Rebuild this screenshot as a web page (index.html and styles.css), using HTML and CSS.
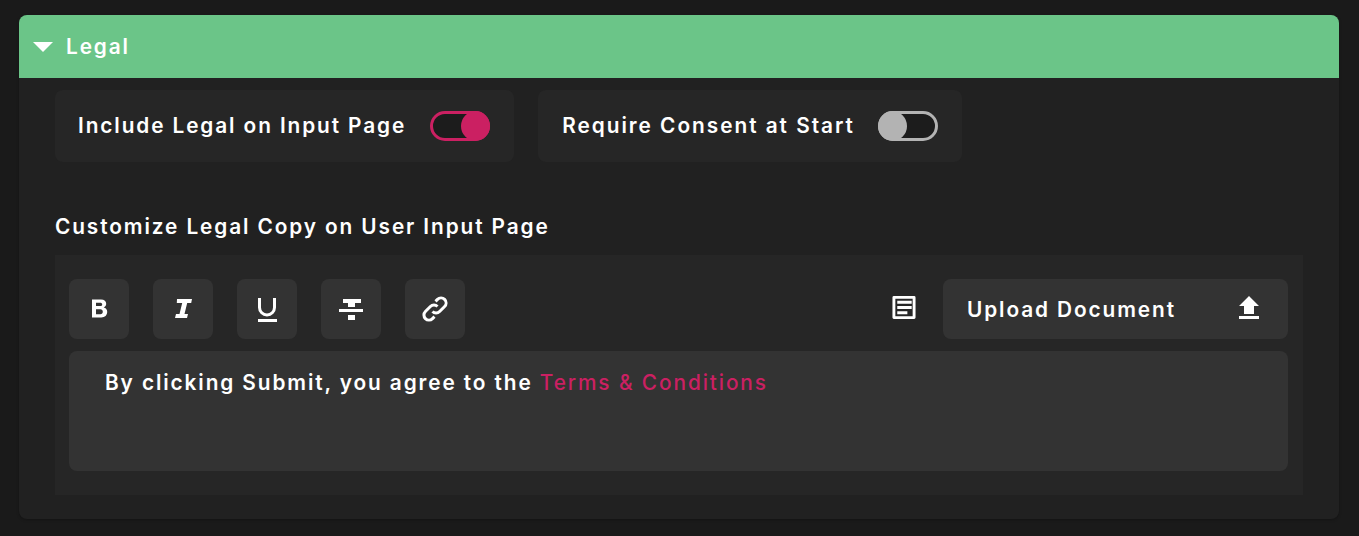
FILE: index.html
```html
<!DOCTYPE html>
<html lang="en">
<head>
<meta charset="utf-8">
<title>Legal</title>
<link rel="stylesheet" href="styles.css">
</head>
<body>
<section class="card">
  <header class="card-head">
    <svg class="caret" width="20" height="10" viewBox="0 0 20 10"><path d="M0 0H20L10 10Z" fill="#fff"/></svg>
    <span>Legal</span>
  </header>
  <div class="card-body">
    <div class="toggles">
      <div class="toggle-card first">
        <span class="toggle-label">Include Legal on Input Page</span>
        <span class="switch on"><i class="knob"></i></span>
      </div>
      <div class="toggle-card second">
        <span class="toggle-label">Require Consent at Start</span>
        <span class="switch"><i class="knob"></i></span>
      </div>
    </div>
    <h2 class="section-title">Customize Legal Copy on User Input Page</h2>
    <div class="editor">
      <div class="toolbar">
        <button class="tool"><svg width="24" height="24" viewBox="0 0 24 24"><path fill="#fff" fill-rule="evenodd" d="M5 2.500h9c3.300 0 5.200 1.600 5.200 4.300 0 1.800-1 3.100-2.500 3.700 2.200.5 3.500 2.100 3.500 4.300 0 3.500-2.300 5.700-5.900 5.700H5zM9 5.800v3.300h4c1.400 0 2.200-.6 2.200-1.700 0-1-.8-1.600-2.200-1.600zM9 12.300v4.900h4.400c1.500 0 2.400-.9 2.400-2.500 0-1.500-.9-2.400-2.400-2.400z"/></svg></button>
        <button class="tool"><svg width="24" height="24" viewBox="0 0 24 24"><path fill="#fff" d="M6 2H21L20.200 6H16.200L13.500 17H17L16 21H4L5 17H8.500L11.200 6H5.800z"/></svg></button>
        <button class="tool"><svg width="24" height="26" viewBox="0 0 24 26"><path fill="none" stroke="#fff" stroke-width="3" d="M4.500 2V11.500a7.500 7.500 0 0 0 15 0V2"/><path fill="#fff" d="M3 23h19v3H3z"/></svg></button>
        <button class="tool"><svg width="26" height="24" viewBox="0 0 26 24"><path fill="#fff" d="M5 2h18v4h-6v4h-7V6H5zM1 12h24v3H1zM10 18h7v5h-7z"/></svg></button>
        <button class="tool"><svg width="28" height="28" viewBox="0 0 28 28" fill="none" stroke="#fff" stroke-width="3"><path d="M11.500 16.500a5 5 0 0 0 7.100 0l5-5a5 5 0 0 0-7.100-7.100l-2 2"/><path d="M16.500 11.500a5 5 0 0 0-7.100 0l-5 5a5 5 0 0 0 7.100 7.100l2-2"/></svg></button>
        <span class="spacer"></span>
        <svg class="doc" width="26" height="25" viewBox="0 0 26 26"><path fill="#fff" fill-rule="evenodd" d="M2.500 1h21A1.500 1.500 0 0 1 25 2.500v21a1.500 1.500 0 0 1-1.500 1.500h-21A1.500 1.500 0 0 1 1 23.500v-21A1.500 1.500 0 0 1 2.500 1zM4 4v18h18V4zM6 6h15v3H6zM6 11.500h15v3H6zM6 17h10.500v3H6z"/></svg>
        <button class="upload">
          <span>Upload Document</span>
          <svg width="22" height="26" viewBox="0 0 22 26"><path fill="#fff" d="M10 0L20 10h-5v8H5v-8H0zM0 20h20v3H0z"/></svg>
        </button>
      </div>
      <div class="copy">By clicking Submit, you agree to the <a href="#">Terms &amp; Conditions</a></div>
    </div>
  </div>
</section>
</body>
</html>
```
FILE: styles.css
```css
* { box-sizing: border-box; }
html, body { margin: 0; height: 100%; }
body {
  background: #1a1a1a;
  padding: 15px 20px 17px 19px;
  font-family: Inter, "Liberation Sans", sans-serif;
  font-weight: 600;
  color: #fff;
  font-size: 20.8px;
  letter-spacing: 1.9px;
  overflow: hidden;
}
.card {
  background: #212121;
  border-radius: 8px;
  height: 504px;
  overflow: hidden;
  box-shadow: 0 1px 3px rgba(0,0,0,.25);
}
.card-head {
  height: 63px;
  background: #6bc588;
  display: flex;
  align-items: center;
  padding-left: 14px;
  gap: 13px;
}
.caret { display: block; }
.card-body { padding: 12px 36px 24px; }
.toggles { display: flex; gap: 24px; }
.toggle-card {
  height: 72px;
  background: #262626;
  border-radius: 8px;
  display: flex;
  align-items: center;
  padding: 0 24px 0 23px;
  gap: 24px;
}
.toggle-card.second { padding-left: 24px; gap: 23px; letter-spacing: 1.98px; }
.toggle-label { padding-bottom: 1px; }
.switch {
  width: 60px;
  height: 30px;
  border: 3px solid #b3b3b3;
  border-radius: 15px;
  background: #1c1c1c;
  display: flex;
  align-items: center;
  justify-content: flex-start;
}
.knob {
  display: block;
  width: 29px;
  height: 30px;
  margin: -3px;
  border-radius: 50%;
  background: #b3b3b3;
}
.switch.on { border-color: #cb2062; justify-content: flex-end; }
.switch.on .knob { background: #cb2062; }
.section-title {
  margin: 53px 0 16px;
  font: inherit;
  line-height: 24px;
}
.editor {
  background: #262626;
  height: 240px;
  padding: 24px 15px 24px 14px;
}
.toolbar { display: flex; align-items: center; gap: 24px; }
.tool, .upload {
  border: 0;
  background: #333;
  color: #fff;
  border-radius: 8px;
  height: 60px;
  display: flex;
  align-items: center;
  justify-content: center;
  font: inherit;
  letter-spacing: inherit;
  padding: 0;
}
.tool { width: 60px; }
.spacer { flex: 1; }
.doc { margin: 0 2px 3px 0; }
.upload {
  width: 345px;
  justify-content: space-between;
  padding: 0 27px 0 24px;
}
.copy {
  margin-top: 12px;
  height: 120px;
  background: #333;
  border-radius: 8px;
  padding: 20px 36px;
  line-height: 24px;
}
.copy a { color: #cb2062; text-decoration: none; font-weight: 500; }
```
